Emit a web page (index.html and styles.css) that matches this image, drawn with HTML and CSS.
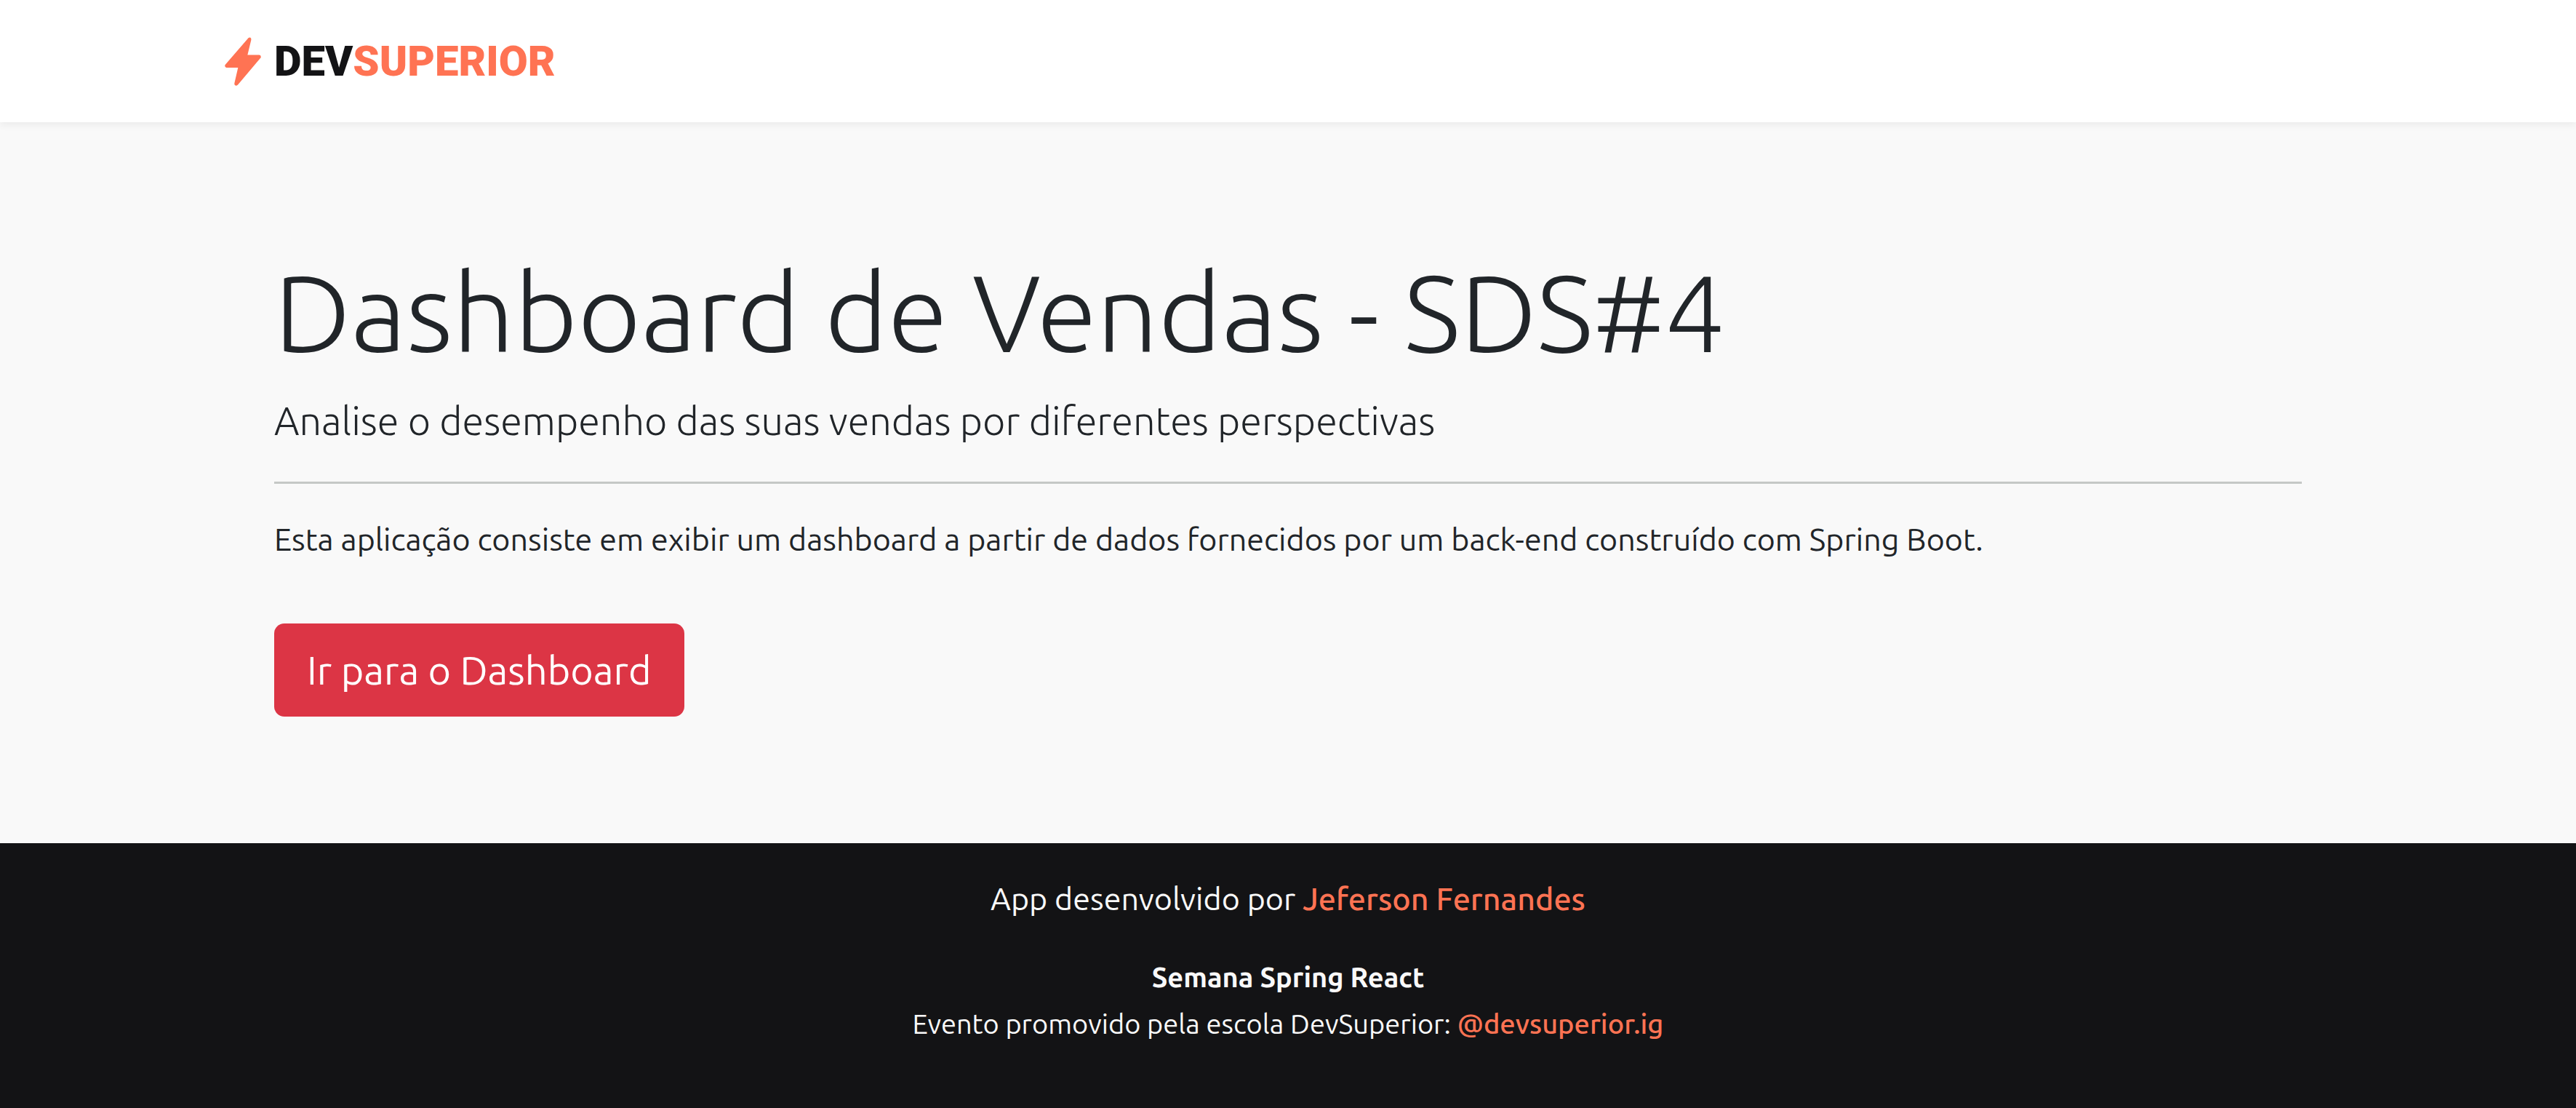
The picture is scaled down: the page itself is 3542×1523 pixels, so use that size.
FILE: index.html
```html
<!DOCTYPE html>
<html lang="pt-BR">
<head>
<meta charset="utf-8">
<meta name="viewport" content="width=device-width, initial-scale=1">
<title>DSVendas</title>
<link rel="stylesheet" href="styles.css">
</head>
<body>
<header class="site-header">
  <div class="container">
    <a class="brand" href="#">
      <svg class="brand-bolt" viewBox="0 0 148 200" aria-hidden="true">
        <path d="M97 3Q101 0 105 2Q109 5 108 11L93 73H141Q148 74 148 81Q148 84 146 86L54 195Q50 200 45 199Q38 197 39 190L54 125H6Q0 124 0 118Q0 115 2 113Z"/>
      </svg>
      <span class="brand-name">DEV<span class="brand-accent">SUPERIOR</span></span>
    </a>
  </div>
</header>
<main class="container">
  <section class="hero">
    <h1 class="hero-title">Dashboard de Vendas - SDS#4</h1>
    <p class="hero-lead">Analise o desempenho das suas vendas por diferentes perspectivas</p>
    <hr class="hero-rule">
    <p class="hero-text">Esta aplicação consiste em exibir um dashboard a partir de dados fornecidos por um back-end construído com Spring Boot.</p>
    <a class="button" href="#">Ir para o Dashboard</a>
  </section>
</main>
<footer class="site-footer">
  <p class="credit">App desenvolvido por <a href="#">Jeferson Fernandes</a></p>
  <p class="event-name">Semana Spring React</p>
  <p class="event-text">Evento promovido pela escola DevSuperior: <a href="#">@devsuperior.ig</a></p>
</footer>
</body>
</html>
```

FILE: styles.css
```css
* {
  box-sizing: border-box;
}

body {
  display: flex;
  flex-direction: column;
  min-height: 100vh;
  margin: 0;
  background: #f9f9f9;
  color: #212529;
  font-family: Ubuntu, "Noto Sans", sans-serif;
  font-size: 43px;
  line-height: 64px;
}

h1,
p {
  margin: 0;
}

.container {
  width: 100%;
  max-width: 2924px;
  margin: 0 auto;
}

.site-header {
  padding: 48px 0;
  background: #fff;
  box-shadow: 0 4px 10px rgba(0, 0, 0, 0.06);
}

.brand {
  display: inline-flex;
  align-items: center;
  gap: 18px;
  height: 72px;
  color: #131315;
  text-decoration: none;
  vertical-align: top;
}

.brand-bolt {
  width: 50px;
  height: 67px;
  fill: #ff7353;
}

.brand-name {
  font-family: Roboto, sans-serif;
  font-size: 58px;
  font-weight: 900;
}

.brand-accent {
  color: #ff7353;
}

.hero {
  padding: 170px 68px 174px;
}

.hero-title {
  font-size: 150px;
  font-weight: 300;
  line-height: 180px;
}

.hero-lead {
  margin-top: 20px;
  font-size: 54px;
  font-weight: 300;
  line-height: 80px;
}

.hero-rule {
  height: 3px;
  margin: 44px 0;
  border: 0;
  background: #c5c8c6;
}

.hero-text {
  margin-bottom: 84px;
}

.button {
  display: inline-block;
  padding: 24px 45px;
  border-radius: 14px;
  background: #dc3545;
  color: #fff;
  font-size: 54px;
  line-height: 80px;
  text-decoration: none;
  vertical-align: top;
}

.site-footer {
  flex: 1;
  padding: 44px 24px 80px;
  background: #131315;
  color: #f9f9f9;
  font-size: 38px;
  text-align: center;
}

.site-footer a {
  color: #ff7353;
  font-weight: 500;
  text-decoration: none;
}

.credit {
  margin-bottom: 44px;
  font-size: 43px;
}

.event-name {
  font-weight: 700;
}
```
